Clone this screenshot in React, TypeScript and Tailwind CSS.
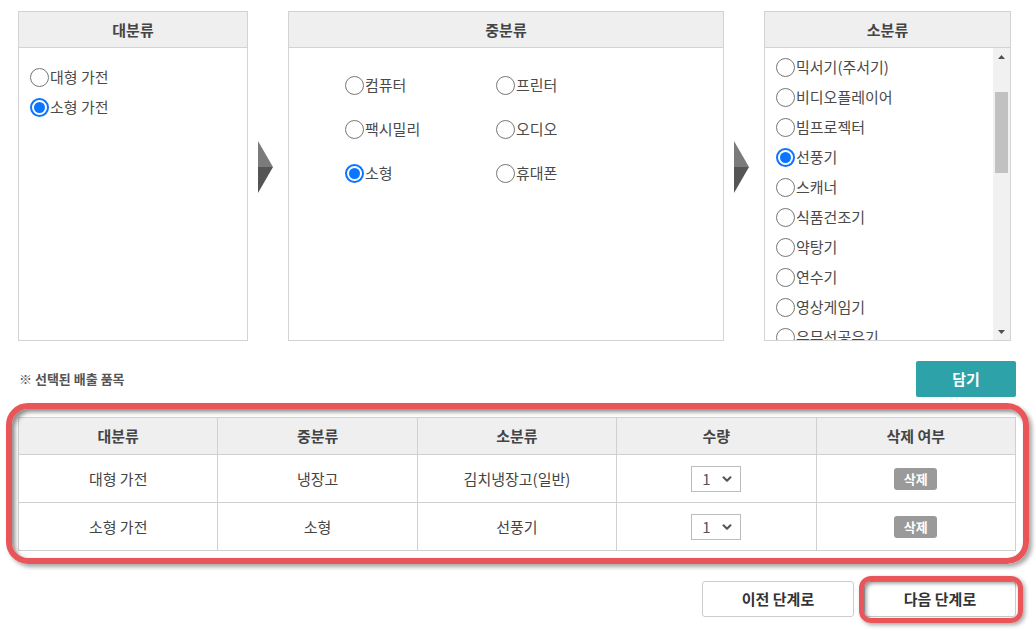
import React from "react";
import { ChevronDown } from "lucide-react";

const Radio = ({ checked }: { checked?: boolean }) =>
  checked ? (
    <span className="w-[19px] h-[19px] rounded-full border-2 border-[#0a75ff] bg-white flex items-center justify-center shrink-0">
      <span className="w-[11px] h-[11px] rounded-full bg-[#0a75ff]" />
    </span>
  ) : (
    <span className="w-[19px] h-[19px] rounded-full border-[1.5px] border-[#767676] bg-white shrink-0" />
  );

const RadioItem = ({ label, checked }: { label: string; checked?: boolean }) => (
  <div className="flex items-center gap-[1px] whitespace-nowrap">
    <Radio checked={checked} />
    <span>{label}</span>
  </div>
);

const Arrow = () => (
  <div className="w-[40px] pl-[10px] pt-[130px] shrink-0">
    <svg width="15" height="52" viewBox="0 0 15 52">
      <polygon points="0,0 15,26 0,26" fill="#7b7b7b" />
      <polygon points="0,26 15,26 0,52" fill="#555555" />
    </svg>
  </div>
);

const PanelHeader = ({ title }: { title: string }) => (
  <div className="h-[36px] bg-[#efefef] border-b border-[#d3d3d3] flex items-center justify-center font-bold text-[#444]">
    {title}
  </div>
);

const smallItems = [
  "믹서기(주서기)",
  "비디오플레이어",
  "빔프로젝터",
  "선풍기",
  "스캐너",
  "식품건조기",
  "약탕기",
  "연수기",
  "영상게임기",
  "유무선공유기",
];

const rows = [
  { large: "대형 가전", mid: "냉장고", small: "김치냉장고(일반)" },
  { large: "소형 가전", mid: "소형", small: "선풍기" },
];

const App = () => {
  return (
    <div className="w-[1036px] h-[631px] bg-white pl-[18px] pr-[20px] pt-[11px] font-['Noto_Sans_CJK_KR',sans-serif] text-[15px] leading-[20px] text-[#4a4a4a]">
      <div className="flex h-[330px]">
        <div className="w-[230px] border border-[#d3d3d3] flex flex-col">
          <PanelHeader title="대분류" />
          <div className="pt-[14px] pl-[11px]">
            <div className="h-[30px] flex items-center">
              <RadioItem label="대형 가전" />
            </div>
            <div className="h-[30px] flex items-center">
              <RadioItem label="소형 가전" checked />
            </div>
          </div>
        </div>
        <Arrow />
        <div className="w-[436px] border border-[#d3d3d3] flex flex-col">
          <PanelHeader title="중분류" />
          <div className="pt-[15px] pl-[56px] grid grid-cols-[151px_151px] auto-rows-[44px] items-center">
            <RadioItem label="컴퓨터" />
            <RadioItem label="프린터" />
            <RadioItem label="팩시밀리" />
            <RadioItem label="오디오" />
            <RadioItem label="소형" checked />
            <RadioItem label="휴대폰" />
          </div>
        </div>
        <Arrow />
        <div className="w-[247px] border border-[#d3d3d3] flex flex-col">
          <PanelHeader title="소분류" />
          <div className="flex flex-1 min-h-0">
            <div className="flex-1 overflow-hidden pt-[4px] pl-[11px]">
              {smallItems.map((item) => (
                <div key={item} className="h-[30px] flex items-center">
                  <RadioItem label={item} checked={item === "선풍기"} />
                </div>
              ))}
            </div>
            <div className="w-[17px] bg-[#f1f1f1] flex flex-col items-center">
              <div className="h-[17px] flex items-center justify-center">
                <svg width="7" height="4" viewBox="0 0 7 4">
                  <polygon points="3.5,0 7,4 0,4" fill="#505050" />
                </svg>
              </div>
              <div className="mt-[27px] w-[13px] h-[81px] bg-[#c1c1c1]" />
              <div className="flex-1" />
              <div className="h-[17px] flex items-center justify-center">
                <svg width="7" height="4" viewBox="0 0 7 4">
                  <polygon points="0,0 7,0 3.5,4" fill="#505050" />
                </svg>
              </div>
            </div>
          </div>
        </div>
      </div>

      <div className="mt-[20px] h-[36px] flex items-center justify-between">
        <div className="pl-[1px] text-[13px] font-semibold text-[#555]">
          ※ 선택된 배출 품목
        </div>
        <button className="w-[100px] h-[36px] bg-[#2ea2a9] text-white font-bold text-[15px] rounded-[2px]">
          담기
        </button>
      </div>

      <div className="relative mt-[20px]">
        <table className="w-full border-collapse table-fixed text-[#444]">
          <thead>
            <tr className="h-[37px] bg-[#efefef]">
              {["대분류", "중분류", "소분류", "수량", "삭제 여부"].map((h) => (
                <th key={h} className="border border-[#d0d0d0] font-bold">
                  {h}
                </th>
              ))}
            </tr>
          </thead>
          <tbody>
            {rows.map((row) => (
              <tr key={row.small} className="h-[48px] text-center">
                <td className="border border-[#d0d0d0]">{row.large}</td>
                <td className="border border-[#d0d0d0]">{row.mid}</td>
                <td className="border border-[#d0d0d0]">{row.small}</td>
                <td className="border border-[#d0d0d0]">
                  <div className="mx-auto w-[50px] h-[26px] border border-[#bdbdbd] bg-white flex items-center justify-between pl-[10px] pr-[6px] text-[#555]">
                    <span>1</span>
                    <ChevronDown size={14} strokeWidth={3.5} color="#555" />
                  </div>
                </td>
                <td className="border border-[#d0d0d0]">
                  <span className="inline-flex items-center justify-center w-[43px] h-[22px] rounded-[3px] bg-[#9a9a9a] text-white text-[13px] font-bold">
                    삭제
                  </span>
                </td>
              </tr>
            ))}
          </tbody>
        </table>
        <div className="absolute -top-[14px] -left-[12px] -right-[13px] -bottom-[13px] border-[6px] border-[#e8565a] rounded-[22px] shadow-[inset_3px_3px_4px_rgba(0,0,0,0.45),3px_3px_4px_rgba(0,0,0,0.35)] pointer-events-none" />
      </div>

      <div className="mt-[30px] flex justify-end gap-[10px]">
        <button className="w-[152px] h-[36px] border border-[#cccccc] rounded-[3px] bg-white font-bold text-[#333]">
          이전 단계로
        </button>
        <div className="relative">
          <button className="w-[152px] h-[36px] border border-[#cccccc] rounded-[3px] bg-white font-bold text-[#333]">
            다음 단계로
          </button>
          <div className="absolute -top-[5px] -left-[5px] -right-[7px] -bottom-[6px] border-[5px] border-[#e8565a] rounded-[12px] shadow-[inset_2px_2px_4px_rgba(0,0,0,0.45),2px_2px_4px_rgba(0,0,0,0.35)] pointer-events-none" />
        </div>
      </div>
    </div>
  );
};

export default App;
